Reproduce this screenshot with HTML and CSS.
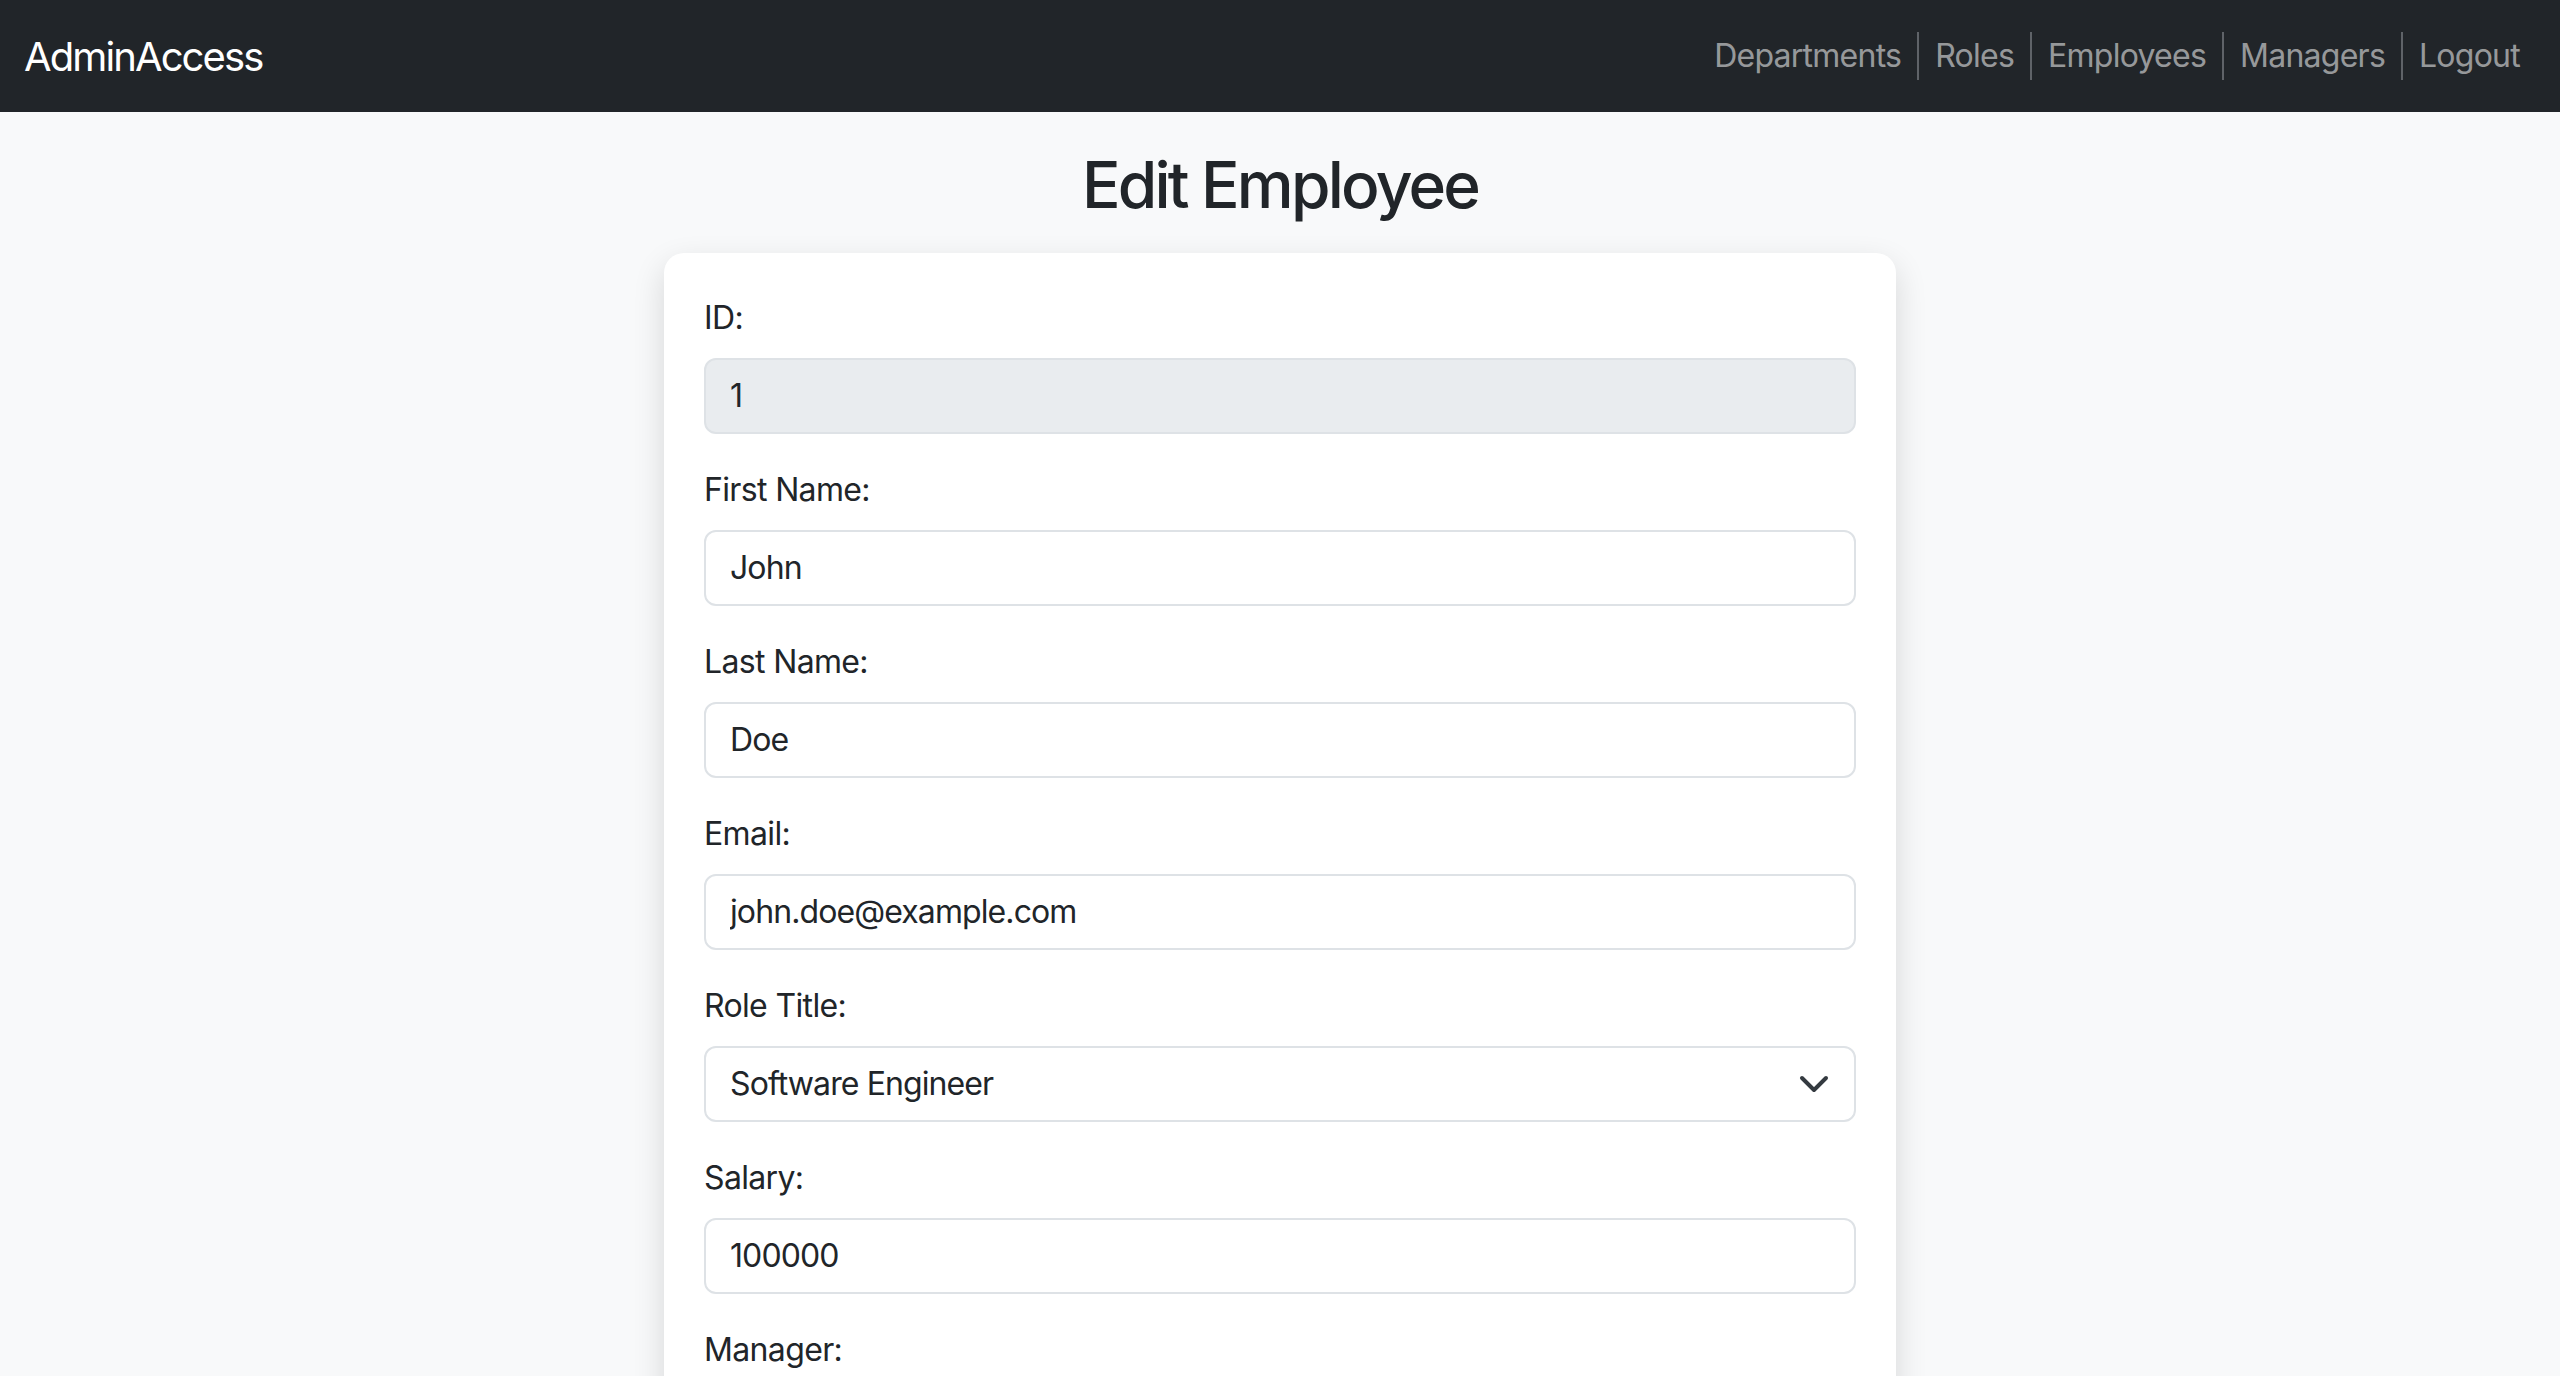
FILE: index.html
```html
<!DOCTYPE html>
<html lang="en">
<head>
<meta charset="utf-8">
<title>Edit Employee</title>
<link rel="stylesheet" href="styles.css">
</head>
<body>
<nav class="navbar">
  <a class="brand" href="#">AdminAccess</a>
  <ul class="nav">
    <li><a href="#">Departments</a></li>
    <li><a href="#">Roles</a></li>
    <li><a href="#">Employees</a></li>
    <li><a href="#">Managers</a></li>
    <li><a href="#">Logout</a></li>
  </ul>
</nav>
<main class="main">
  <h2 class="title">Edit Employee</h2>
  <form class="card">
    <div class="group">
      <label class="label" for="id">ID:</label>
      <input class="control readonly" id="id" type="text" value="1" readonly>
    </div>
    <div class="group">
      <label class="label" for="fn">First Name:</label>
      <input class="control" id="fn" type="text" value="John">
    </div>
    <div class="group">
      <label class="label" for="ln">Last Name:</label>
      <input class="control" id="ln" type="text" value="Doe">
    </div>
    <div class="group">
      <label class="label" for="em">Email:</label>
      <input class="control" id="em" type="email" value="john.doe@example.com">
    </div>
    <div class="group">
      <label class="label" for="role">Role Title:</label>
      <div class="select-wrap">
        <select class="control select" id="role">
          <option selected>Software Engineer</option>
          <option>Product Manager</option>
          <option>Designer</option>
        </select>
        <svg class="chevron" viewBox="0 0 16 16" width="32" height="32" aria-hidden="true"><path d="m2 5 6 6 6-6" fill="none" stroke="#343a40" stroke-width="2" stroke-linecap="round" stroke-linejoin="round"/></svg>
      </div>
    </div>
    <div class="group">
      <label class="label" for="sal">Salary:</label>
      <input class="control" id="sal" type="text" value="100000">
    </div>
    <div class="group">
      <label class="label" for="mgr">Manager:</label>
      <div class="select-wrap">
        <select class="control select" id="mgr">
          <option selected>Jane Smith</option>
        </select>
        <svg class="chevron" viewBox="0 0 16 16" width="32" height="32" aria-hidden="true"><path d="m2 5 6 6 6-6" fill="none" stroke="#343a40" stroke-width="2" stroke-linecap="round" stroke-linejoin="round"/></svg>
      </div>
    </div>
    <div class="actions">
      <button class="btn" type="submit">Update Employee</button>
    </div>
  </form>
</main>
</body>
</html>
```
FILE: styles.css
```css
html {
  scrollbar-width: none;
}
html::-webkit-scrollbar {
  display: none;
}
* {
  box-sizing: border-box;
}
body {
  margin: 0;
  background: #f8f9fa;
  color: #212529;
  font-family: Inter, "Noto Sans", "Liberation Sans", sans-serif;
  font-size: 32px;
  line-height: 1.5;
}
.navbar {
  height: 112px;
  background: #212529;
  display: flex;
  align-items: center;
  justify-content: space-between;
  padding: 0 24px;
}
.brand {
  color: #fff;
  text-decoration: none;
  font-size: 40px;
  line-height: 60px;
  letter-spacing: -1.9px;
  padding-top: 2px;
}
.nav {
  display: flex;
  list-style: none;
  margin: 0;
  padding: 0;
}
.nav li {
  line-height: 48px;
}
.nav li + li {
  border-left: 2px solid #5f6368;
}
.nav a {
  display: block;
  padding: 0 16px;
  color: rgba(255, 255, 255, 0.55);
  text-decoration: none;
  font-size: 32px;
  letter-spacing: -0.75px;
}
.main {
  padding-bottom: 64px;
}
.title {
  margin: 35px 0 29px;
  text-align: center;
  font-size: 64px;
  font-weight: 500;
  line-height: 1.2;
  letter-spacing: -2.8px;
}
.card {
  width: 1232px;
  margin: 0 auto;
  background: #fff;
  border-radius: 20px;
  padding: 41px 40px 40px;
  box-shadow: 0 12px 32px rgba(0, 0, 0, 0.14);
}
.group {
  margin-bottom: 32px;
}
.label {
  display: block;
  margin-bottom: 16px;
  font-size: 32px;
  line-height: 48px;
  letter-spacing: -0.65px;
}
.control {
  display: block;
  width: 100%;
  height: 76px;
  padding: 12px 24px;
  font-family: inherit;
  font-size: 32px;
  line-height: 48px;
  color: #212529;
  background: #fff;
  border: 2px solid #dee2e6;
  border-radius: 12px;
  letter-spacing: -0.9px;
  outline: none;
}
.readonly {
  background: #e9ecef;
}
.select-wrap {
  position: relative;
}
.select {
  appearance: none;
  -webkit-appearance: none;
  padding-right: 72px;
}
.chevron {
  position: absolute;
  right: 26px;
  top: 22px;
  pointer-events: none;
}
.actions {
  padding-top: 8px;
}
.btn {
  font-family: inherit;
  font-size: 32px;
  line-height: 48px;
  padding: 12px 24px;
  color: #fff;
  background: #0d6efd;
  border: 2px solid #0d6efd;
  border-radius: 12px;
}
```
